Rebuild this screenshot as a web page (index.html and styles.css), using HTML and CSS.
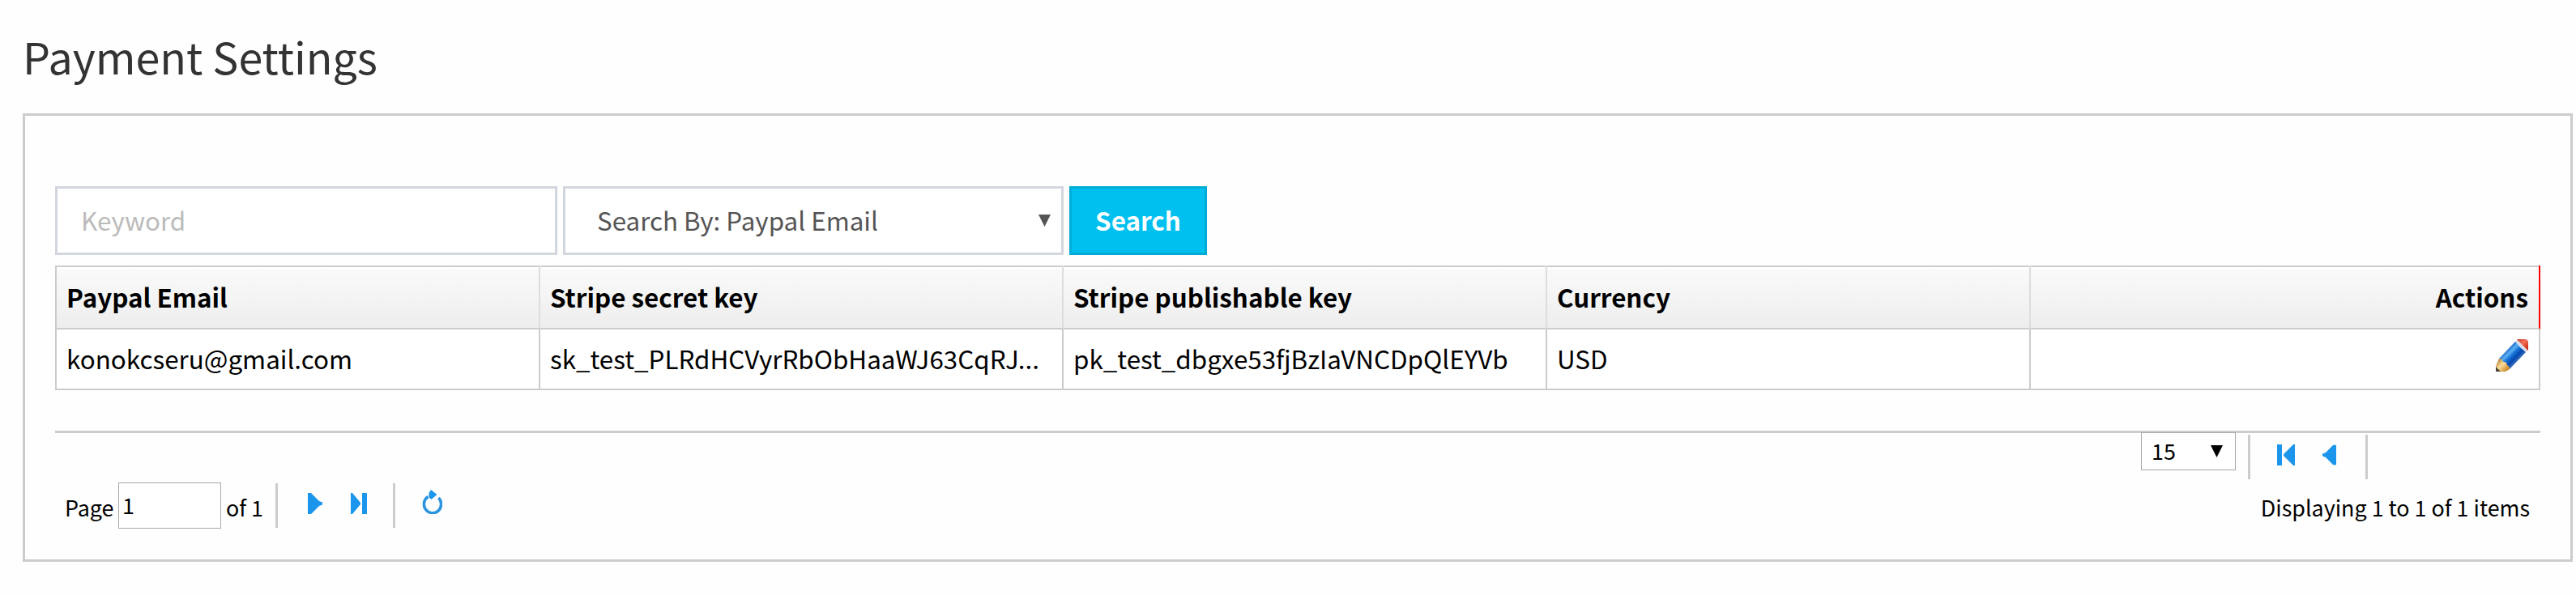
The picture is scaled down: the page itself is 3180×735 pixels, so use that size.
FILE: index.html
```html
<!DOCTYPE html>
<html lang="en">
<head>
<meta charset="utf-8">
<title>Payment Settings</title>
<link rel="stylesheet" href="styles.css">
</head>
<body>
<h1 class="title">Payment Settings</h1>
<main class="panel">
  <div class="search">
    <div class="field keyword">Keyword</div>
    <div class="field select"><span>Search By: Paypal Email</span><svg class="arrow" viewBox="0 0 15 15"><path d="M0 0H15L7.5 15Z" fill="currentColor"/></svg></div>
    <div class="button">Search</div>
  </div>
  <div class="grid">
    <div class="row head">
      <div class="cell">Paypal Email</div>
      <div class="cell">Stripe secret key</div>
      <div class="cell">Stripe publishable key</div>
      <div class="cell">Currency</div>
      <div class="cell actions">Actions</div>
    </div>
    <div class="row body">
      <div class="cell">konokcseru@gmail.com</div>
      <div class="cell">sk_test_PLRdHCVyrRbObHaaWJ63CqRJ...</div>
      <div class="cell">pk_test_dbgxe53fjBzIaVNCDpQlEYVb</div>
      <div class="cell">USD</div>
      <div class="cell actions">
        <svg class="pencil" viewBox="0 0 40 40">
          <defs>
            <linearGradient id="barrel" gradientUnits="userSpaceOnUse" x1="10" y1="16" x2="23" y2="29">
              <stop offset="0" stop-color="#1767c4"/><stop offset=".3" stop-color="#5cb0f4"/><stop offset=".52" stop-color="#1674d8"/><stop offset=".8" stop-color="#0546ae"/><stop offset="1" stop-color="#2c68bd"/>
            </linearGradient>
            <linearGradient id="wood" gradientUnits="userSpaceOnUse" x1="2" y1="27" x2="13" y2="38">
              <stop offset="0" stop-color="#b98a3c"/><stop offset=".45" stop-color="#fbdc9c"/><stop offset="1" stop-color="#d0902f"/>
            </linearGradient>
            <linearGradient id="rubber" gradientUnits="userSpaceOnUse" x1="27" y1="0" x2="39" y2="13">
              <stop offset="0" stop-color="#c93a27"/><stop offset=".45" stop-color="#f2705a"/><stop offset="1" stop-color="#c81f08"/>
            </linearGradient>
          </defs>
          <path d="M27 0H37Q40 1 40 4V13L37 15L25 3Z" fill="url(#rubber)"/>
          <path d="M23 4L27 1Q32 7 39 13L36 17Z" fill="#d8dde6"/>
          <path d="M4 24L24 3Q29 10 37 16L17 37Q12 29 4 24Z" fill="url(#barrel)"/>
          <path d="M4 24Q8 24 9 28Q14 28 14 32Q17 33 17 37L12 40H0V33Z" fill="url(#wood)"/>
          <path d="M0 34L6 40H0Z" fill="#4c4638"/>
        </svg>
      </div>
    </div>
  </div>
  <div class="pager">
    <div class="pager-top">
      <div class="size"><span>15</span><svg class="arrow" viewBox="0 0 15 15"><path d="M0 0H15L7.5 15Z" fill="currentColor"/></svg></div>
      <i class="sep"></i>
      <svg class="first" viewBox="0 0 22 26"><path d="M0 0H6V26H0ZM22 0V26H20L8 14V12L20 0Z"/></svg>
      <svg class="prev" viewBox="0 0 18 26"><path d="M18 0V26H14L4 16L0 14.500V11.500L4 10L14 0Z"/></svg>
      <i class="sep"></i>
    </div>
    <div class="pager-bottom">
      <span class="label first-label">Page</span>
      <div class="page">1</div>
      <span class="label of">of 1</span>
      <i class="sep"></i>
      <svg class="next" viewBox="0 0 18 26"><path d="M0 0H4L14 10L18 11.500V14.500L14 16L4 26H0Z"/></svg>
      <svg class="last" viewBox="0 0 20 26"><path d="M0 0H2L12 12V14L2 26H0ZM14 0H20V26H14Z"/></svg>
      <i class="sep"></i>
      <svg class="refresh" viewBox="0 0 25 30"><path d="M7.500 8.400A10.600 11 0 1 0 20.500 10" fill="none" stroke="#2a94df" stroke-width="3.600"/><path d="M11 0L18.500 6L11.500 12L8.500 9.500V4Z"/></svg>
      <span class="label status">Displaying 1 to 1 of 1 items</span>
    </div>
  </div>
</main>
</body>
</html>
```
FILE: styles.css
```css
* { box-sizing: border-box; }
body {
  margin: 0;
  padding: 0 4px 0 28px;
  height: 735px;
  overflow: hidden;
  background: #fefefe;
  font-family: "Noto Sans CJK SC", "Noto Sans", sans-serif;
  font-size: 31.36px;
  color: #000;
  white-space: nowrap;
}
svg { display: block; flex: none; fill: #1c96ec; }
.title {
  margin: 0;
  height: 140px;
  line-height: 137px;
  font-size: 53.75px;
  font-weight: 400;
  color: #333;
}
.panel {
  height: 554px;
  border: 3px solid #ccc;
  padding: 87px 37px 0;
}
.search { display: flex; height: 85px; margin-bottom: 13px; line-height: 77px; }
.field { border: 3px solid #d2d6de; background: #fff; height: 85px; }
.keyword { width: 620px; margin-right: 7px; padding-left: 29px; color: #bbb; }
.select {
  display: flex;
  justify-content: space-between;
  width: 618px;
  margin-right: 7px;
  padding: 0 13px 0 39px;
  color: #555;
}
.arrow { width: 15px; height: 15px; }
.select .arrow { margin-top: 32px; }
.button {
  width: 170px;
  border: 3px solid #00acd6;
  background: #00c0ef;
  color: #fff;
  font-weight: 700;
  text-align: center;
}
.grid { border-left: 2px solid #ccc; background: #fff; }
.row { display: grid; grid-template-columns: 597px 646px 597px 597px 629px; }
.cell { padding-left: 12px; border-right: 2px solid #ccc; border-bottom: 2px solid #ccc; }
.head {
  height: 79px;
  line-height: 73px;
  font-weight: 700;
  background: linear-gradient(#ccc 2px, #fff 2px, #fff 4px, #fafafa 4px, #ededed);
}
.head .cell { border-right-color: #ddd; padding-top: 2px; }
.body { height: 75px; line-height: 72px; }
.cell.actions { padding-right: 13px; text-align: right; }
.head .cell.actions { border-right-color: #f00; }
.pencil { width: 40px; height: 40px; margin: 12px 0 0 auto; }
.pager { margin-top: 50px; border-top: 3px solid #ccc; font-size: 26.88px; }
.sep { flex: none; width: 3px; height: 55px; background: #ccc; }
.pager-top { display: flex; justify-content: flex-end; padding-right: 213px; height: 61px; }
.pager-top .sep { margin-top: 2px; }
.size {
  display: flex;
  justify-content: space-between;
  width: 117px;
  height: 47px;
  margin: -1px 15px 0 0;
  padding: 0 15px 0 12px;
  border: 1px solid #a9a9a9;
  background: #fff;
  line-height: 44px;
}
.size .arrow { margin-top: 15px; }
.first { width: 22px; height: 26px; margin: 14px 34px 0 33px; }
.prev { width: 17px; height: 26px; margin: 14px 36px 0 0; }
.pager-bottom { display: flex; padding: 0 13px 0 12px; }
.label { line-height: 62px; }
.first-label { width: 66px; }
.page {
  width: 127px;
  height: 57px;
  border: 1px solid #a9a9a9;
  background: #fff;
  padding-left: 4px;
  line-height: 54px;
}
.of { width: 67px; padding-left: 6px; }
.pager-bottom .sep { margin-top: 1px; }
.next { width: 18px; height: 26px; margin: 13px 35px 0 37px; }
.last { width: 20px; height: 26px; margin: 13px 32px 0 0; }
.refresh { width: 25px; height: 30px; margin: 9px 0 0 33px; }
.status { margin-left: auto; }
```
